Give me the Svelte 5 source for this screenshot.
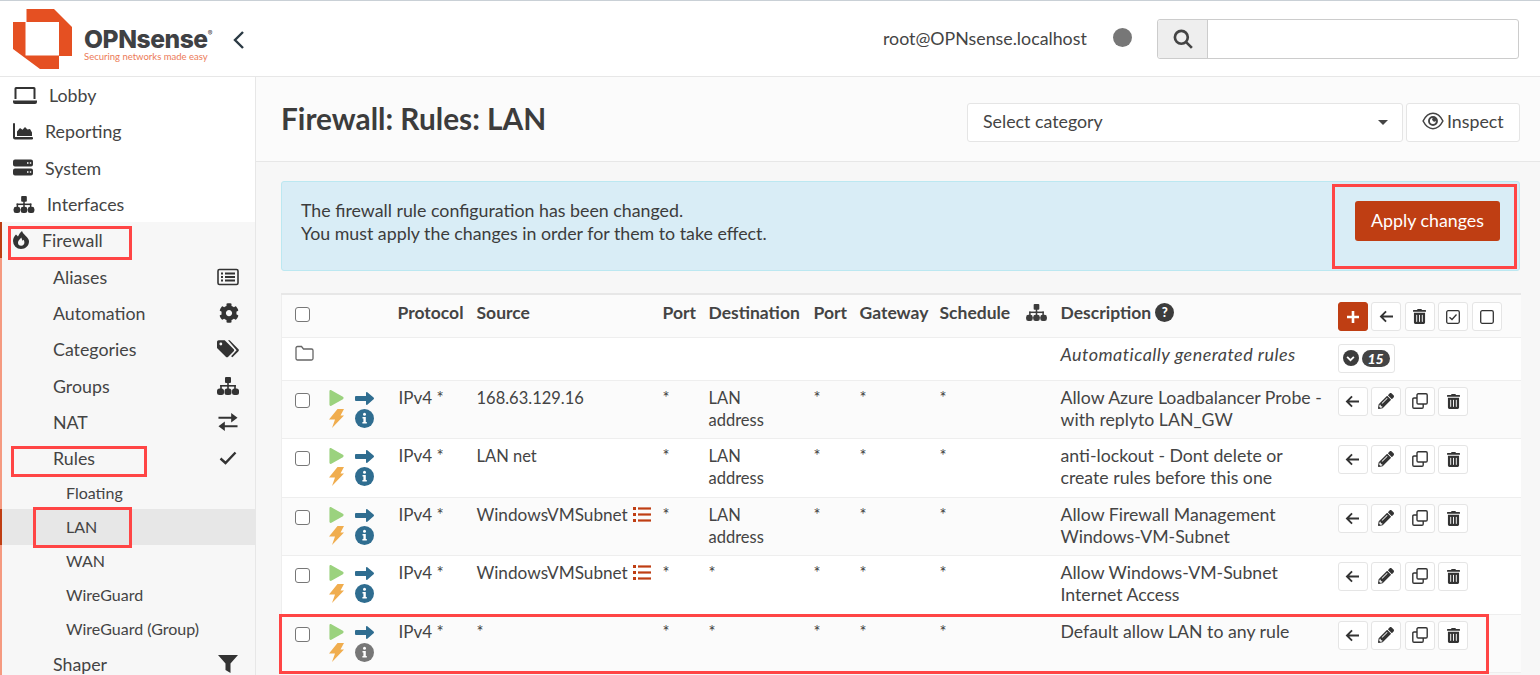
<script>
  const topNav = [
    { label: 'Lobby', icon: 'laptop', cls: 'i-lobby' },
    { label: 'Reporting', icon: 'chart', cls: 'i-rep' },
    { label: 'System', icon: 'server', cls: 'i-rep' },
    { label: 'Interfaces', icon: 'sitemap', cls: 'i-if' }
  ];
  const fwNav = [
    { label: 'Aliases', icon: 'listbox' },
    { label: 'Automation', icon: 'cog' },
    { label: 'Categories', icon: 'tags' },
    { label: 'Groups', icon: 'sitemap' },
    { label: 'NAT', icon: 'exchange' },
    { label: 'Rules', icon: 'check' }
  ];
  const rulesNav = ['Floating', 'LAN', 'WAN', 'WireGuard', 'WireGuard (Group)'];
  const rules = [
    { src: '168.63.129.16', list: false, dest: ['LAN', 'address'], desc: ['Allow Azure Loadbalancer Probe -', 'with replyto LAN_GW'], h: 'r58' },
    { src: 'LAN net', list: false, dest: ['LAN', 'address'], desc: ['anti-lockout - Dont delete or', 'create rules before this one'], h: 'r59' },
    { src: 'WindowsVMSubnet', list: true, dest: ['LAN', 'address'], desc: ['Allow Firewall Management', 'Windows-VM-Subnet'], h: 'r58' },
    { src: 'WindowsVMSubnet', list: true, dest: ['*'], desc: ['Allow Windows-VM-Subnet', 'Internet Access'], h: 'r59' },
    { src: '*', list: false, dest: ['*'], desc: ['Default allow LAN to any rule'], h: 'r58', grey: true }
  ];
  const paths = {
    trash: 'M32 464a48 48 0 0 0 48 48h288a48 48 0 0 0 48-48V128H32zm272-256a16 16 0 0 1 32 0v224a16 16 0 0 1-32 0zm-96 0a16 16 0 0 1 32 0v224a16 16 0 0 1-32 0zm-96 0a16 16 0 0 1 32 0v224a16 16 0 0 1-32 0zM432 32H312l-9.4-18.7A24 24 0 0 0 281.1 0H166.8a23.72 23.72 0 0 0-21.4 13.3L136 32H16A16 16 0 0 0 0 48v32a16 16 0 0 0 16 16h416a16 16 0 0 0 16-16V48a16 16 0 0 0-16-16z',
    pencil: 'M497.9 142.1l-46.1 46.1c-4.7 4.7-12.3 4.7-17 0l-111-111c-4.7-4.7-4.7-12.3 0-17l46.1-46.1c18.7-18.7 49.1-18.7 67.9 0l60.1 60.1c18.8 18.7 18.8 49.1 0 67.9zM284.2 99.8L21.6 362.4.4 483.9c-2.9 16.4 11.4 30.6 27.8 27.8l121.5-21.3 262.6-262.6c4.7-4.7 4.7-12.3 0-17l-111-111c-4.8-4.7-12.4-4.7-17.1 0zM124.1 339.9c-5.5-5.5-5.5-14.3 0-19.8l154-154c5.5-5.5 14.3-5.5 19.8 0s5.5 14.3 0 19.8l-154 154c-5.5 5.5-14.3 5.5-19.8 0zM88 424h48v36.3l-64.5 11.3-31.1-31.1L51.7 376H88v48z',
    cog: 'M487.4 315.7l-42.6-24.6c4.3-23.2 4.3-47 0-70.2l42.6-24.6c4.9-2.8 7.1-8.6 5.5-14-11.1-35.6-30-67.8-54.7-94.6-3.8-4.1-10-5.1-14.8-2.3L380.8 110c-17.9-15.4-38.5-27.3-60.8-35.1V25.8c0-5.6-3.9-10.5-9.4-11.7-36.7-8.2-74.3-7.8-109.2 0-5.5 1.2-9.4 6.1-9.4 11.7V75c-22.2 7.9-42.8 19.8-60.8 35.1L88.7 85.5c-4.9-2.8-11-1.9-14.8 2.3-24.7 26.7-43.6 58.9-54.7 94.6-1.7 5.4.6 11.2 5.5 14L67.3 221c-4.3 23.2-4.3 47 0 70.2l-42.6 24.6c-4.9 2.8-7.1 8.6-5.5 14 11.1 35.6 30 67.8 54.7 94.6 3.8 4.1 10 5.1 14.8 2.3l42.6-24.6c17.9 15.4 38.5 27.3 60.8 35.1v49.2c0 5.6 3.9 10.5 9.4 11.7 36.7 8.2 74.3 7.8 109.2 0 5.5-1.2 9.4-6.1 9.4-11.7v-49.2c22.2-7.9 42.8-19.8 60.8-35.1l42.6 24.6c4.9 2.8 11 1.9 14.8-2.3 24.7-26.7 43.6-58.9 54.7-94.6 1.5-5.5-.7-11.3-5.6-14.1zM256 336c-44.1 0-80-35.9-80-80s35.9-80 80-80 80 35.9 80 80-35.9 80-80 80z'
  };
</script>

{#snippet icon(name, cls = '')}
  {#if name === 'trash'}
    <svg class={cls} viewBox="0 0 448 512"><path fill="currentColor" d={paths.trash}/></svg>
  {:else if name === 'pencil'}
    <svg class={cls} viewBox="0 0 512 512"><path fill="currentColor" d={paths.pencil}/></svg>
  {:else if name === 'cog'}
    <svg class={cls} viewBox="0 0 512 512"><path fill="currentColor" d={paths.cog}/></svg>
  {:else if name === 'sitemap'}
    <svg class={cls} viewBox="0 0 22 18"><g fill="currentColor"><rect x="8" y="0" width="6" height="6" rx="1"/><rect x="10.2" y="5" width="1.6" height="4.5"/><rect x="3.2" y="8" width="15.6" height="1.6"/><rect x="3.2" y="8" width="1.6" height="4"/><rect x="10.2" y="8" width="1.6" height="4"/><rect x="17.2" y="8" width="1.6" height="4"/><rect x="0" y="11.5" width="7" height="6.5" rx="2.5"/><rect x="7.5" y="11.5" width="7" height="6.5" rx="2.5"/><rect x="15" y="11.5" width="7" height="6.5" rx="2.5"/></g></svg>
  {:else if name === 'laptop'}
    <svg class={cls} viewBox="0 0 24 17"><g fill="currentColor"><path d="M3 0h18a1.500 1.500 0 0 1 1.500 1.500V12h-2V2h-17v10h-2V1.500A1.500 1.500 0 0 1 3 0z"/><path d="M0 13.500h24v1.500a2 2 0 0 1-2 2H2a2 2 0 0 1-2-2z"/></g></svg>
  {:else if name === 'chart'}
    <svg class={cls} viewBox="0 0 20 17"><g fill="currentColor"><path d="M0 1a1 1 0 0 1 2 0v13h17a1.200 1.200 0 0 1 0 2.500H2a2 2 0 0 1-2-2z"/><path d="M4 13V8.500L7 5l2.500 1.800L12 4l2.500 2.500L17 6l2 3.500V13z"/></g></svg>
  {:else if name === 'server'}
    <svg class={cls} viewBox="0 0 20 16"><path fill="currentColor" fill-rule="evenodd" d="M2 0h16a2 2 0 0 1 2 2v3a2 2 0 0 1-2 2H2a2 2 0 0 1-2-2V2a2 2 0 0 1 2-2zm12 2.800v1.500h1.500V2.800zm2.800 0v1.500h1.400V2.800zM2 9h16a2 2 0 0 1 2 2v3a2 2 0 0 1-2 2H2a2 2 0 0 1-2-2v-3a2 2 0 0 1 2-2zm12 2.800v1.500h1.500v-1.500zm2.800 0v1.500h1.400v-1.500z"/></svg>
  {:else if name === 'fire'}
    <svg class={cls} viewBox="0 0 16 18"><path fill="currentColor" fill-rule="evenodd" d="M8 18A8 8 0 0 1 0 10C0 7 1.500 5 3 3.500L5 5.500C6 3.500 7 1.500 9 0c.5 2 2 3 3.500 4.800C14.800 7 16 8.500 16 10.500 16 14.800 12.500 18 8 18zm.3-11.500C7.500 7.500 5 9.500 5 11.500a3.200 3.200 0 0 0 3.200 3.200c1.900 0 3.200-1.500 3.200-3.300 0-1-.3-1.800-.8-2.700L9.500 9.800z"/></svg>
  {:else if name === 'listbox'}
    <svg class={cls} viewBox="0 0 22 17"><g fill="none" stroke="currentColor"><rect x="1" y="1" width="20" height="15" rx="1.500" stroke-width="1.600"/><path d="M8 5h10M8 8.500h10M8 12h10" stroke-width="1.800"/><path d="M4 5h2M4 8.500h2M4 12h2" stroke-width="2"/></g></svg>
  {:else if name === 'tags'}
    <svg class={cls} viewBox="0 0 20 16"><g fill="currentColor"><path fill-rule="evenodd" d="M0 1.500A1.500 1.500 0 0 1 1.500 0H7l8 8a1.500 1.500 0 0 1 0 2.200L10.200 15a1.500 1.500 0 0 1-2.200 0L0 7zM3.500 2.200a1.300 1.300 0 1 0 0 2.600 1.300 1.300 0 0 0 0-2.600z"/><path d="M10 0h1.500l7.800 8a1.500 1.500 0 0 1 0 2.200L14 15.500l-1.200-1 5-5.300z"/></g></svg>
  {:else if name === 'exchange'}
    <svg class={cls} viewBox="0 0 20 17"><g fill="currentColor"><path d="M1 3.500h12V0l6 4.500L13 9V5.500H1z"/><path d="M19 11.500H7V8l-6 4.500L7 17v-3.500h12z"/></g></svg>
  {:else if name === 'check'}
    <svg class={cls} viewBox="0 0 18 14"><path fill="none" stroke="currentColor" stroke-width="2.400" d="M1.500 7.500L6.500 12 16.500 1.500"/></svg>
  {:else if name === 'filter'}
    <svg class={cls} viewBox="0 0 20 18"><path fill="currentColor" d="M0 0h20l-7.500 8.500V18L7.500 15V8.500z"/></svg>
  {:else if name === 'back'}
    <svg class={cls} viewBox="0 0 16 14"><path fill="none" stroke="currentColor" stroke-width="2" d="M15 7H2M7.500 1.500L2 7l5.500 5.500"/></svg>
  {:else if name === 'clone'}
    <svg class={cls} viewBox="0 0 16 16"><g fill="none" stroke="currentColor" stroke-width="1.400"><rect x="5" y=".8" width="10.200" height="10.200" rx="1.200"/><path d="M5 5H2a1.200 1.200 0 0 0-1.200 1.200V14A1.200 1.200 0 0 0 2 15.200h8a1.200 1.200 0 0 0 1.200-1.200v-3"/></g></svg>
  {:else if name === 'checksq'}
    <svg class={cls} viewBox="0 0 14 14"><rect x=".7" y=".7" width="12.600" height="12.600" rx="1.500" fill="none" stroke="currentColor" stroke-width="1.300"/><path d="M3.500 7.200L6 9.500l4.500-5" fill="none" stroke="currentColor" stroke-width="1.300"/></svg>
  {:else if name === 'square'}
    <svg class={cls} viewBox="0 0 14 14"><rect x=".7" y=".7" width="12.600" height="12.600" rx="1.500" fill="none" stroke="currentColor" stroke-width="1.300"/></svg>
  {:else if name === 'folder'}
    <svg class={cls} viewBox="0 0 19 16"><path fill="none" stroke="currentColor" stroke-width="1.300" d="M1 3a1.500 1.500 0 0 1 1.500-1.500h4L8.500 4h8A1.500 1.500 0 0 1 18 5.500v8a1.500 1.500 0 0 1-1.500 1.500h-14A1.500 1.500 0 0 1 1 13.500z"/></svg>
  {:else if name === 'search'}
    <svg class={cls} viewBox="0 0 18 18"><g fill="none" stroke="currentColor" stroke-width="2.400"><circle cx="7.500" cy="7.500" r="5.800"/><path d="M11.800 11.800L17 17"/></g></svg>
  {:else if name === 'eye'}
    <svg class={cls} viewBox="0 0 20 16"><g fill="none" stroke="currentColor" stroke-width="1.400"><path d="M1 8c2-4 5-7 9-7s7 3 9 7c-2 4-5 7-9 7s-7-3-9-7z"/></g><path fill="currentColor" fill-rule="evenodd" d="M10 3.500a4.500 4.500 0 1 1 0 9 4.500 4.500 0 0 1 0-9zm-.3 1.800a2.700 2.700 0 1 0 2.900 2.500 1.700 1.700 0 0 1-2.900-2.500z"/></svg>
  {:else if name === 'play'}
    <svg class={cls} viewBox="0 0 15 17"><path fill="currentColor" d="M0 1.500C0 .3 1 -.3 2 .3l12.300 7c1 .6 1 1.800 0 2.400L2 16.700c-1 .6-2 0-2-1.200z"/></svg>
  {:else if name === 'arrow'}
    <svg class={cls} viewBox="0 0 19 13"><path fill="currentColor" d="M1 4h10V.8c0-.7.800-1 1.300-.6l6.300 5.400c.5.500.5 1.200 0 1.700l-6.300 5.500c-.5.400-1.300.1-1.300-.6V9H1a1 1 0 0 1-1-1V5a1 1 0 0 1 1-1z"/></svg>
  {:else if name === 'bolt'}
    <svg class={cls} viewBox="0 0 15 19"><path fill="currentColor" d="M8.500 0H15l-3.500 6.500H15L3 19l3-8.500H0z"/></svg>
  {:else if name === 'info'}
    <svg class={cls} viewBox="0 0 19 19"><circle cx="9.500" cy="9.500" r="9.500" fill="currentColor"/><g fill="#fff"><circle cx="9.500" cy="5.300" r="1.500"/><path d="M7.500 8h3.300v5h1v1.500H7.400V13h1V9.500h-.9z"/></g></svg>
  {:else if name === 'list'}
    <svg class={cls} viewBox="0 0 18 15"><g fill="currentColor"><rect x="0" y="0" width="3" height="3"/><rect x="0" y="6" width="3" height="3"/><rect x="0" y="12" width="3" height="3"/><rect x="5" y=".4" width="13" height="2.200"/><rect x="5" y="6.400" width="13" height="2.200"/><rect x="5" y="12.400" width="13" height="2.200"/></g></svg>
  {/if}
{/snippet}

<div class="page">
  <header class="topbar">
    <div class="brand">
      <svg class="logo" viewBox="0 0 59 60">
        <g fill="#e55022">
          <path d="M13.500 0H41l18 18v29H46V13H13.500z"/>
          <path d="M0 13h12.500v33.500H46V60H27L0 40z"/>
        </g>
      </svg>
      <div class="wordmark">
        <div class="wm-name">OPNsense<sup>®</sup></div>
        <div class="wm-tag">Securing networks made easy</div>
      </div>
      <svg class="collapse" viewBox="0 0 11 18"><path fill="none" stroke="#2b3a44" stroke-width="2.400" d="M10 1L2 9l8 8"/></svg>
    </div>
    <div class="top-right">
      <span class="user">root@OPNsense.localhost</span>
      <span class="dot"></span>
      <div class="search">
        <span class="search-addon">{@render icon('search', 'i-search')}</span>
        <span class="search-input"></span>
      </div>
    </div>
  </header>

  <div class="body">
    <nav class="sidebar">
      <div class="nav-top">
        {#each topNav as n}
          <div class="nav-item">
            {@render icon(n.icon, 'i-nav ' + n.cls)}
            <span>{n.label}</span>
          </div>
        {/each}
      </div>
      <div class="nav-open">
        <div class="nav-item fw">
          {@render icon('fire', 'i-fire')}
          <span>Firewall</span>
        </div>
        {#each fwNav as n}
          <div class="nav-sub">
            <span>{n.label}</span>
            {@render icon(n.icon, 'i-sub i-' + n.icon)}
          </div>
        {/each}
        {#each rulesNav as r}
          <div class="nav-sub2" class:active={r === 'LAN'}>{r}</div>
        {/each}
        <div class="nav-sub">
          <span>Shaper</span>
          {@render icon('filter', 'i-sub')}
        </div>
      </div>
    </nav>

    <main class="main">
      <div class="titlebar">
        <h1>Firewall: Rules: LAN</h1>
        <div class="title-tools">
          <div class="select">
            <span>Select category</span>
            <span class="caret"></span>
          </div>
          <div class="inspect">{@render icon('eye', 'i-eye')}<span>Inspect</span></div>
        </div>
      </div>

      <div class="content">
        <div class="alert">
          <div class="alert-text">
            <div>The firewall rule configuration has been changed.</div>
            <div>You must apply the changes in order for them to take effect.</div>
          </div>
          <button class="apply">Apply changes</button>
        </div>

        <table class="rules">
          <colgroup>
            <col class="c-check"/><col class="c-icons"/><col class="c-proto"/><col class="c-src"/><col class="c-port"/><col class="c-dest"/><col class="c-port"/><col class="c-gw"/><col class="c-sched"/><col class="c-net"/><col class="c-desc"/><col class="c-act"/>
          </colgroup>
          <thead>
            <tr class="head">
              <th class="first"><span class="cb"></span></th>
              <th></th>
              <th>Protocol</th>
              <th>Source</th>
              <th>Port</th>
              <th>Destination</th>
              <th>Port</th>
              <th>Gateway</th>
              <th>Schedule</th>
              <th>{@render icon('sitemap', 'i-th')}</th>
              <th><span class="desc-h">Description <span class="help">?</span></span></th>
              <th class="act">
                <div class="btns">
                  <span class="btn primary"><svg class="i-plus" viewBox="0 0 14 14"><path d="M7 1v12M1 7h12" stroke="#fff" stroke-width="2.600"/></svg></span>
                  <span class="btn">{@render icon('back', 'i-back')}</span>
                  <span class="btn">{@render icon('trash', 'i-trash')}</span>
                  <span class="btn">{@render icon('checksq', 'i-sq')}</span>
                  <span class="btn">{@render icon('square', 'i-sq')}</span>
                </div>
              </th>
            </tr>
          </thead>
          <tbody>
            <tr class="group">
              <td class="first">{@render icon('folder', 'i-folder')}</td>
              <td colspan="9"></td>
              <td class="auto"><em>Automatically generated rules</em></td>
              <td class="act">
                <span class="btn wide">
                  <span class="chev"><svg viewBox="0 0 8 6"><path d="M1 1.500l3 3 3-3" fill="none" stroke="#fff" stroke-width="1.600"/></svg></span>
                  <span class="count">15</span>
                </span>
              </td>
            </tr>
            {#each rules as r, i}
              <tr class={r.h} class:alt={i % 2 === 0}>
                <td class="first"><span class="cb"></span></td>
                <td>
                  <div class="state">
                    {@render icon('play', 'i-play')}
                    {@render icon('arrow', 'i-arrow')}
                    {@render icon('bolt', 'i-bolt')}
                    {@render icon('info', r.grey ? 'i-info grey' : 'i-info')}
                  </div>
                </td>
                <td class="proto">IPv4 *</td>
                <td class="src" class:named={r.list}>{r.src}{#if r.list}{@render icon('list', 'i-list')}{/if}</td>
                <td>*</td>
                <td>{#each r.dest as d}<div>{d}</div>{/each}</td>
                <td>*</td>
                <td>*</td>
                <td>*</td>
                <td></td>
                <td class="desc">{#each r.desc as d}<div>{d}</div>{/each}</td>
                <td class="act">
                  <div class="btns">
                    <span class="btn">{@render icon('back', 'i-back')}</span>
                    <span class="btn">{@render icon('pencil', 'i-pencil')}</span>
                    <span class="btn">{@render icon('clone', 'i-clone')}</span>
                    <span class="btn">{@render icon('trash', 'i-trash')}</span>
                  </div>
                </td>
              </tr>
            {/each}
          </tbody>
        </table>
      </div>
    </main>
  </div>

  <div class="mark m-fw"></div>
  <div class="mark m-rules"></div>
  <div class="mark m-lan"></div>
  <div class="mark m-apply"></div>
  <div class="mark m-row"></div>
</div>

<style>
  :global(body) { margin: 0; background: #f7f7f7; overflow: hidden; }
  .page {
    position: relative;
    width: 1540px;
    height: 675px;
    overflow: hidden;
    font-family: "Lato", "Liberation Sans", sans-serif;
    font-size: 17.800px;
    color: #3f3f3f;
    box-sizing: border-box;
  }
  .topbar {
    height: 77px;
    box-sizing: border-box;
    background: #fff;
    border-top: 1px solid #c9d0d6;
    border-bottom: 1px solid #e7e7e7;
    display: flex;
    justify-content: space-between;
    align-items: center;
  }
  .brand { display: flex; align-items: center; padding-left: 13px; height: 100%; }
  .logo { width: 59px; height: 60px; flex: none; margin-top: 1px; }
  .wordmark { margin-left: 12px; width: 126px; margin-top: 11px; }
  .wm-name { font-family: "Inter", sans-serif; font-weight: 800; font-size: 24.600px; line-height: 26px; color: #3f4144; letter-spacing: -.45px; white-space: nowrap; }
  .wm-name sup { font-size: 7px; font-weight: 400; vertical-align: 12px; line-height: 0; letter-spacing: 0; }
  .wm-tag { font-family: "Lato", sans-serif; font-size: 9.500px; line-height: 10px; color: #ec7a58; white-space: nowrap; }
  .collapse { width: 11px; height: 18px; margin-left: 23px; margin-top: 3px; }
  .top-right { display: flex; align-items: center; padding-right: 21px; }
  .user { color: #444; margin-top: -1px; width: 205px; white-space: nowrap; }
  .dot { width: 19px; height: 19px; border-radius: 50%; background: #777; margin-left: 25px; margin-top: -3px; }
  .search { display: flex; width: 362px; height: 40px; margin-left: 25px; border: 1px solid #ccc; border-radius: 3px; box-sizing: border-box; background: #fff; margin-top: 1px; }
  .search-addon { width: 49px; background: #eee; border-right: 1px solid #ccc; display: flex; align-items: center; justify-content: center; border-radius: 3px 0 0 3px; color: #444; }
  .search-input { flex: 1; }
  :global(.i-search) { width: 20px; height: 20px; }

  .body { display: flex; height: 598px; }
  .sidebar { width: 256px; flex: none; box-sizing: border-box; background: #fff; border-right: 1px solid #e7e7e7; }
  .nav-item { height: 36.300px; display: flex; align-items: center; padding-left: 13px; color: #444; white-space: nowrap; }
  .nav-item span { margin-left: 12px; }
  :global(.i-nav) { width: 19px; height: 17px; color: #333; flex: none; }
  :global(.i-lobby) { width: 24px !important; }
  :global(.i-rep) { width: 20px !important; }
  :global(.i-if) { width: 22px !important; }
  .nav-open { background: #f7f7f7; border-left: 2px solid #f59a80; height: 460px; }
  .nav-open .nav-item { padding-left: 11px; background: transparent; position: relative; }
  .nav-open .nav-item::before { content: ""; position: absolute; left: -2px; top: 0; bottom: 0; width: 2px; background: #bf3e13; }
  :global(.i-fire) { width: 16px; height: 18px; color: #333; flex: none; }
  .fw span { margin-left: 13px; }
  .nav-sub { height: 36.300px; display: flex; align-items: center; justify-content: space-between; padding: 0 16px 0 51px; color: #444; }
  :global(.i-sub) { width: 22px; height: 18px; color: #333; flex: none; }
  :global(.i-check) { width: 18px !important; margin-right: 2px; }
  :global(.i-cog) { width: 20px !important; height: 20px !important; margin-right: 0; }
  .nav-sub2 { height: 34px; line-height: 34px; padding-left: 64px; color: #444; font-size: 16px; position: relative; }
  .nav-sub2.active { background: #e7e7e7; height: 36px; line-height: 36px; margin: -1px 0; }
  .nav-sub2.active::before { content: ""; position: absolute; left: -2px; top: 0; bottom: 0; width: 2px; background: #bf3e13; }

  .main { flex: 1; background: #f7f7f7; min-width: 0; }
  .titlebar { height: 85px; box-sizing: border-box; background: #fbfbfb; border-bottom: 1px solid #e7e7e7; display: flex; justify-content: space-between; padding: 0 20px 0 25px; }
  h1 { margin: 0; font-size: 29.800px; line-height: 85px; font-weight: 700; color: #3c3c3c; margin-top: -1px; }
  .title-tools { display: flex; padding-top: 26px; gap: 3px; }
  .select { width: 436px; height: 39px; box-sizing: border-box; background: #fff; border: 1px solid #e5e5e5; border-radius: 3px; padding: 0 15px 3px; display: flex; align-items: center; justify-content: space-between; color: #444; }
  .caret { width: 0; height: 0; border-left: 5px solid transparent; border-right: 5px solid transparent; border-top: 5px solid #444; margin-right: -1px; margin-top: 3px; }
  .inspect { width: 114px; height: 39px; box-sizing: border-box; background: #fff; border: 1px solid #e5e5e5; border-radius: 3px; display: flex; align-items: center; padding: 0 0 3px 15px; gap: 3px; color: #444; }
  :global(.i-eye) { width: 22px; height: 18px; color: #444; }

  .content { padding: 19px 20px 0 25px; }
  .alert { height: 90px; box-sizing: border-box; background: #d9edf6; border: 1px solid #bce8f1; border-radius: 3px; display: flex; align-items: center; justify-content: space-between; padding: 0 19px 0 19px; }
  .alert-text { line-height: 23px; color: #3c3c3c; margin-top: -8px; }
  .apply { width: 145px; height: 40px; box-sizing: border-box; border: none; border-radius: 3px; background: #bf3e13; color: #fff; font: inherit; padding: 0 0 2px; margin-top: -11px; }

  .rules { margin-top: 22px; width: 1239px; table-layout: fixed; border-collapse: collapse; border-top: 2px solid #e7e7e7; border-left: 1px solid #eee; background: #fff; font-size: 16.500px; }
  .c-check { width: 47px; } .c-icons { width: 69px; } .c-proto { width: 79px; } .c-src { width: 186px; } .c-port { width: 46px; } .c-dest { width: 105px; } .c-gw { width: 80px; } .c-sched { width: 86px; } .c-net { width: 35px; } .c-desc { width: 277px; } .c-act { width: 183px; }
  th, td { padding: 0; text-align: left; vertical-align: top; line-height: 22.400px; border-bottom: 1px solid #eee; white-space: nowrap; }
  th { font-weight: 700; padding-top: 7px; color: #444; font-size: 17.500px; }
  td { padding-top: 6px; color: #444; }
  .head { height: 43px; background: #fbfbfb; }
  .group { height: 43px; background: #fff; }
  .r58 { height: 58px; } .r59 { height: 59px; }
  tr.alt { background: #fbfbfb; }
  .first { padding-left: 13px; }
  th.first { padding-top: 12px; }
  td.first { padding-top: 12px; }
  .group td.first { padding-top: 7px; }
  .proto { font-size: 17px; padding-left: 1px; }
  .src.named { font-size: 17.200px; }
  .desc { font-size: 17.700px; }
  .cb { display: block; width: 15px; height: 15px; box-sizing: border-box; border: 1.500px solid #777; border-radius: 3px; background: #fff; }
  :global(.i-folder) { display: block; width: 19px; height: 16px; color: #666; }
  :global(.i-th) { width: 21px; height: 17px; color: #3c3c3c; display: block; margin-top: 2px; }
  .desc-h { display: inline-flex; align-items: center; gap: 4px; }
  .help { width: 19px; height: 19px; border-radius: 50%; background: #3c3c3c; color: #fff; font-size: 13px; font-weight: 900; display: inline-flex; align-items: center; justify-content: center; margin-top: -2px; }
  .auto { padding-top: 5px; font-size: 18px; letter-spacing: .45px; }
  td.act { padding-top: 6px; }
  th.act { padding-top: 7px; }
  .btns { display: flex; gap: 3.500px; }
  .btn { width: 30px; height: 29px; box-sizing: border-box; display: inline-flex; align-items: center; justify-content: center; background: #fff; border: 1px solid #e5e5e5; border-radius: 3px; color: #333; }
  .btn.primary { background: #bf3e13; border-color: #bf3e13; }
  .btn.wide { width: 57px; gap: 3px; padding: 0 4px; justify-content: flex-start; }
  .chev { width: 16px; height: 16px; border-radius: 50%; background: #3c3c3c; display: flex; align-items: center; justify-content: center; flex: none; }
  .chev svg { width: 9px; height: 7px; }
  .count { background: #444; color: #fff; border-radius: 9px; width: 28px; height: 17px; font-size: 14px; font-weight: 900; font-style: italic; line-height: 17px; text-align: center; letter-spacing: 0; }
  :global(.i-plus) { width: 14px; height: 14px; }
  :global(.i-back) { width: 15px; height: 13px; }
  :global(.i-trash) { width: 13px; height: 15px; }
  :global(.i-sq) { width: 14px; height: 14px; }
  :global(.i-pencil) { width: 16px; height: 16px; }
  :global(.i-clone) { width: 16px; height: 16px; }

  .state { display: grid; grid-template-columns: 26px 20px; grid-template-rows: 19px 22px; align-items: center; margin-top: 2px; }
  :global(.i-play) { width: 15px; height: 16px; color: #9bd27e; }
  :global(.i-arrow) { width: 19px; height: 13px; color: #2f6d90; }
  :global(.i-bolt) { width: 15px; height: 19px; color: #f0ad4e; }
  :global(.i-info) { width: 19px; height: 19px; color: #2f6d90; }
  :global(.i-info.grey) { color: #777; }
  :global(.i-list) { width: 18px; height: 15px; color: #bf3e13; margin-left: 5px; vertical-align: -1px; }

  .mark { position: absolute; box-sizing: border-box; border: 3px solid #ff4545; pointer-events: none; }
  .m-fw { left: 8px; top: 226px; width: 124px; height: 34px; }
  .m-rules { left: 11px; top: 446px; width: 136px; height: 31px; }
  .m-lan { left: 33px; top: 507px; width: 99px; height: 41px; }
  .m-apply { left: 1332px; top: 184px; width: 185px; height: 85px; }
  .m-row { left: 279px; top: 614px; width: 1210px; height: 60px; }
</style>
